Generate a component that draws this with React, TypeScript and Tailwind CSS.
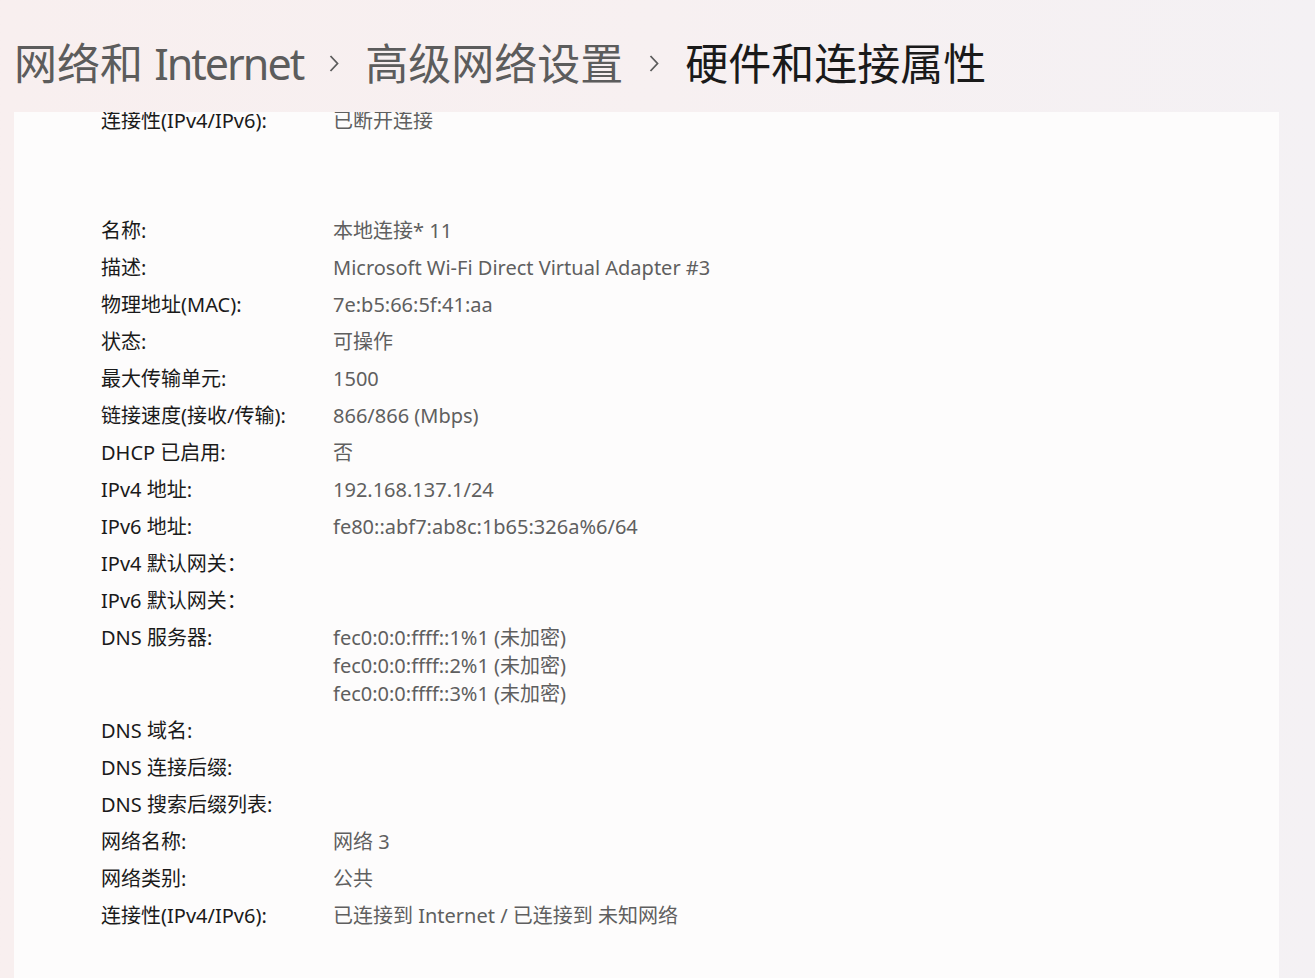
import React from "react";

type Row = { label: string; values: string[] };

const ROWS: Row[] = [
  { label: "名称:", values: ["本地连接* 11"] },
  { label: "描述:", values: ["Microsoft Wi-Fi Direct Virtual Adapter #3"] },
  { label: "物理地址(MAC):", values: ["7e:b5:66:5f:41:aa"] },
  { label: "状态:", values: ["可操作"] },
  { label: "最大传输单元:", values: ["1500"] },
  { label: "链接速度(接收/传输):", values: ["866/866 (Mbps)"] },
  { label: "DHCP 已启用:", values: ["否"] },
  { label: "IPv4 地址:", values: ["192.168.137.1/24"] },
  { label: "IPv6 地址:", values: ["fe80::abf7:ab8c:1b65:326a%6/64"] },
  { label: "IPv4 默认网关：", values: [] },
  { label: "IPv6 默认网关：", values: [] },
  {
    label: "DNS 服务器:",
    values: [
      "fec0:0:0:ffff::1%1 (未加密)",
      "fec0:0:0:ffff::2%1 (未加密)",
      "fec0:0:0:ffff::3%1 (未加密)",
    ],
  },
  { label: "DNS 域名:", values: [] },
  { label: "DNS 连接后缀:", values: [] },
  { label: "DNS 搜索后缀列表:", values: [] },
  { label: "网络名称:", values: ["网络 3"] },
  { label: "网络类别:", values: ["公共"] },
  { label: "连接性(IPv4/IPv6):", values: ["已连接到 Internet / 已连接到 未知网络"] },
];

const FONT = { fontFamily: '"Segoe UI", "Noto Sans", "Noto Sans CJK SC", sans-serif' };

function Chevron() {
  return (
    <svg width="10" height="17" viewBox="0 0 10 17" className="mx-[26px] shrink-0">
      <path d="M1.5 1 L8.5 8.5 L1.5 16" fill="none" stroke="#5c5c5c" strokeWidth="1.8" />
    </svg>
  );
}

function PropRow({ row }: { row: Row }) {
  return (
    <div className="flex">
      <div className="w-[232px] shrink-0 text-[#1a1a1a]">{row.label}</div>
      <div className="flex flex-col text-[#5f5f5f]">
        {row.values.map((v) => (
          <span key={v}>{v}</span>
        ))}
      </div>
    </div>
  );
}

export default function App() {
  return (
    <div
      className="h-[978px] overflow-hidden flex flex-col bg-gradient-to-r from-[#f8efef] via-[#f7f0f1] to-[#f4f1f4]"
      style={FONT}
    >
      {/* breadcrumb header */}
      <header className="h-[112px] shrink-0 flex items-center pl-[14px] pt-[14px] text-[43px] leading-none">
        <span className="text-[#5c5c5c]">
          网络和 <span className="tracking-[-2px]">Internet</span>
        </span>
        <Chevron />
        <span className="text-[#5c5c5c]">高级网络设置</span>
        <Chevron />
        <span className="text-[#1a1a1a]">硬件和连接属性</span>
      </header>

      {/* scrolled properties card */}
      <div className="ml-[14px] w-[1265px] flex-1 overflow-hidden bg-[#fdfcfc]">
        <div className="-mt-[5px] pl-[87px] text-[20px] leading-[28px] flex flex-col">
          <PropRow row={{ label: "连接性(IPv4/IPv6):", values: ["已断开连接"] }} />
          <div className="mt-[82px] flex flex-col gap-[9px]">
            {ROWS.map((r, i) => (
              <PropRow key={i} row={r} />
            ))}
          </div>
        </div>
      </div>
    </div>
  );
}
